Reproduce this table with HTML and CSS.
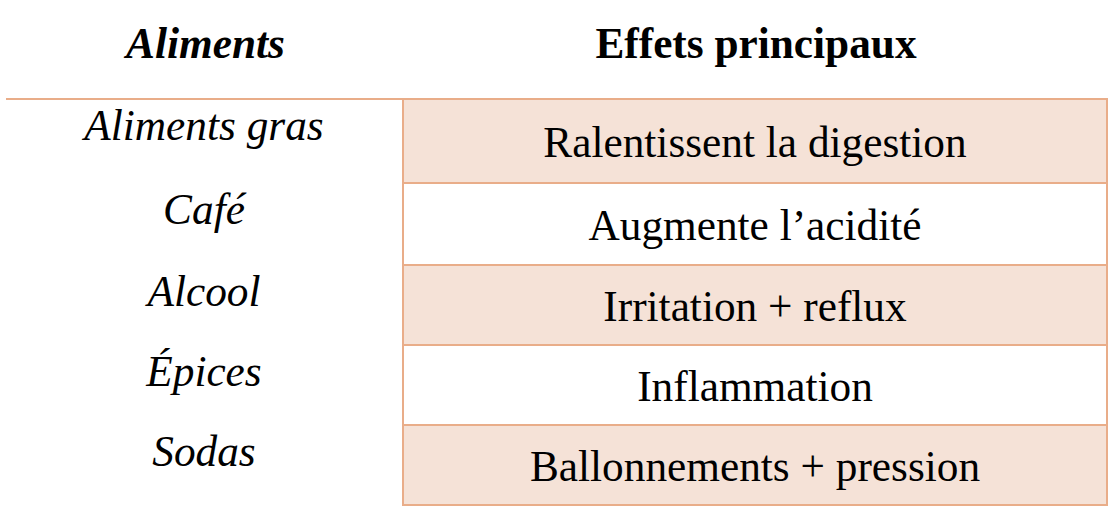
FILE: index.html
```html
<!DOCTYPE html>
<html lang="fr">
<head>
<meta charset="utf-8">
<title>Aliments et effets</title>
<link rel="stylesheet" href="styles.css">
</head>
<body>
<div class="table">
  <div class="head">
    <div class="hcell food-h">Aliments</div>
    <div class="hcell effect-h">Effets principaux</div>
  </div>
  <div class="body">
    <div class="row r1">
      <div class="food">Aliments gras</div>
      <div class="effect shaded">Ralentissent la digestion</div>
    </div>
    <div class="row r2">
      <div class="food">Café</div>
      <div class="effect">Augmente l’acidité</div>
    </div>
    <div class="row r3">
      <div class="food">Alcool</div>
      <div class="effect shaded">Irritation + reflux</div>
    </div>
    <div class="row r3">
      <div class="food">Épices</div>
      <div class="effect">Inflammation</div>
    </div>
    <div class="row r3">
      <div class="food">Sodas</div>
      <div class="effect shaded">Ballonnements + pression</div>
    </div>
  </div>
</div>
</body>
</html>
```

FILE: styles.css
```css
html, body {
  margin: 0;
  padding: 0;
  background: #ffffff;
}

body {
  font-family: "Liberation Serif", "Times New Roman", serif;
  font-size: 43.3px;
  line-height: 50px;
  color: #000000;
}

.table {
  margin-left: 6px;
  width: 1102px;
}

.head {
  display: grid;
  grid-template-columns: 396px 1fr;
  height: 98px;
  box-sizing: border-box;
  padding-top: 18px;
}

.hcell {
  text-align: center;
  font-weight: bold;
}

.food-h {
  font-style: italic;
  padding-left: 3px;
}

.effect-h {
  padding-left: 2px;
}

.body {
  border-top: 2px solid #e9ad89;
}

.row {
  display: grid;
  grid-template-columns: 396px 1fr;
}

.r1 { height: 84px; }
.r2 { height: 82px; }
.r3 { height: 80px; }

.food {
  font-style: italic;
  text-align: center;
  padding-top: 0;
}

.effect {
  display: flex;
  align-items: center;
  justify-content: center;
  border-left: 2px solid #e9ad89;
  border-right: 2px solid #e9ad89;
  border-bottom: 2px solid #e9ad89;
  padding-top: 2px;
}

.shaded {
  background: #f5e2d7;
}
```
